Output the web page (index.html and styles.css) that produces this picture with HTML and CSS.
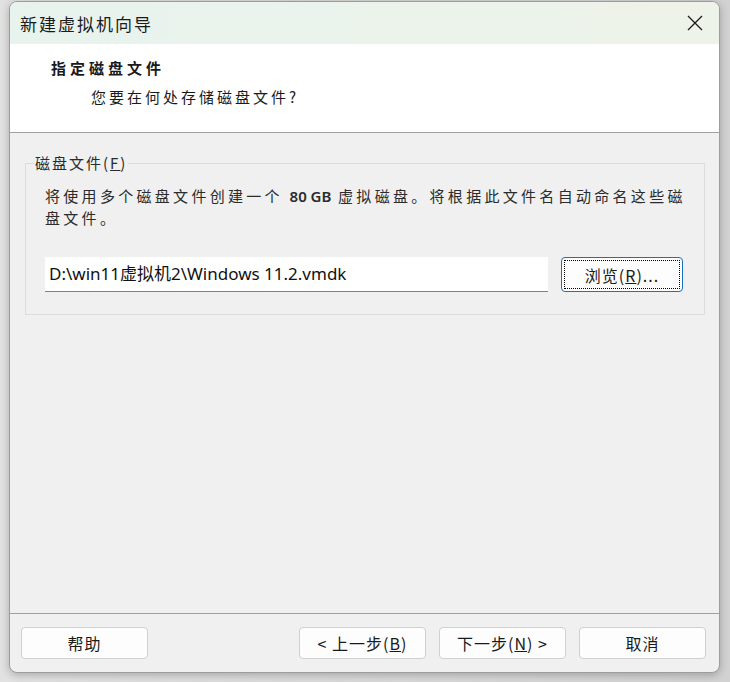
FILE: index.html
```html
<!DOCTYPE html>
<html lang="zh-CN">
<head>
    <meta charset="UTF-8">
    <meta name="viewport" content="width=device-width, initial-scale=1.0">
    <title>新建虚拟机向导</title>
    <link rel="stylesheet" href="styles.css">
</head>
<body>
    <div class="wizard">
        <div class="titlebar">
            <span class="titlebar-text">新建虚拟机向导</span>
            <svg class="close-icon" width="16" height="16" viewBox="0 0 16 16">
                <path d="M1 1 L15 15 M15 1 L1 15" stroke="#1a1a1a" stroke-width="1.3" fill="none"/>
            </svg>
        </div>
        <div class="header">
            <div class="header-title">指定磁盘文件</div>
            <div class="header-sub">您要在何处存储磁盘文件?</div>
        </div>
        <div class="content">
            <fieldset class="group">
                <legend>磁盘文件(<u>F</u>)</legend>
                <p class="desc">将使用多个磁盘文件创建一个 <b>80 GB</b> 虚拟磁盘。将根据此文件名自动命名这些磁<br>盘文件。</p>
                <div class="file-row">
                    <input class="file-input" type="text" value="D:\win11虚拟机2\Windows 11.2.vmdk">
                    <button class="btn btn-focus"><span class="focus-ring">浏览(<u>R</u>)...</span></button>
                </div>
            </fieldset>
        </div>
        <div class="footer">
            <button class="btn">帮助</button>
            <div class="footer-right">
                <button class="btn">&lt; 上一步(<u>B</u>)</button>
                <button class="btn">下一步(<u>N</u>) &gt;</button>
                <button class="btn">取消</button>
            </div>
        </div>
    </div>
</body>
</html>
```

FILE: styles.css
```css
html, body {
    margin: 0;
    padding: 0;
    height: 100%;
    overflow: hidden;
    background: linear-gradient(to right, #e2e2e2, #d2d2d2);
    font-family: "Noto Sans", "Noto Sans CJK SC", sans-serif;
    color: #1a1a1a;
}
.wizard {
    box-sizing: border-box;
    margin: 1px 0 0 9px;
    width: 711px;
    height: 672px;
    border: 1px solid #9d9d9d;
    border-radius: 8px;
    overflow: hidden;
    background: #f0f0f0;
    display: flex;
    flex-direction: column;
    box-shadow: 0 2px 8px rgba(0, 0, 0, 0.25);
}
.titlebar {
    height: 42px;
    flex: none;
    display: flex;
    align-items: center;
    justify-content: space-between;
    padding: 0 16px 0 10px;
    background: linear-gradient(to right, #e8f3ee, #eef3e9);
}
.titlebar-text {
    font-family: "Noto Sans CJK SC", sans-serif;
    font-size: 17px;
    letter-spacing: 2px;
}
.close-icon {
    display: block;
}
.header {
    height: 89px;
    flex: none;
    box-sizing: border-box;
    background: #fff;
    border-bottom: 1px solid #a0a0a0;
    padding: 14px 0 0 41px;
    font-family: "Noto Sans CJK SC", serif;
}
.header-title {
    font-size: 15px;
    font-weight: bold;
    line-height: 20px;
    letter-spacing: 4px;
}
.header-sub {
    font-size: 15px;
    line-height: 20px;
    margin: 9px 0 0 40px;
    letter-spacing: 3px;
}
.content {
    flex: 1;
    padding: 20px 14px 0 15px;
}
.group {
    margin: 0;
    min-width: 0;
    padding: 12px 20px 22px 19px;
    border: 1px solid #dcdcdc;
    font-family: "Noto Sans CJK SC", sans-serif;
}
.group legend {
    font-size: 15px;
    line-height: 20px;
    letter-spacing: 2px;
    padding: 0 1px;
    margin-left: -11px;
    color: #2b2b2b;
}
.desc {
    margin: 0;
    font-size: 15px;
    line-height: 22px;
    letter-spacing: 3.3px;
    white-space: nowrap;
    color: #2b2b2b;
}
.desc b {
    font-family: "Noto Sans", sans-serif;
    font-weight: 600;
    letter-spacing: 0;
}
.file-row {
    display: flex;
    gap: 13px;
    margin-top: 28px;
}
.file-input {
    width: 503px;
    height: 35px;
    box-sizing: border-box;
    border: none;
    border-bottom: 1px solid #808080;
    background: #fff;
    padding: 0 4px 3px;
    font-family: "Noto Sans", "Noto Sans CJK SC", sans-serif;
    font-size: 17px;
    color: #111;
}
.btn {
    width: 127px;
    height: 32px;
    box-sizing: border-box;
    border: 1px solid #d0d0d0;
    border-radius: 4px;
    background: #fdfdfd;
    font-family: "Noto Sans CJK SC", sans-serif;
    font-size: 16px;
    color: #1a1a1a;
    letter-spacing: 1px;
    padding: 0;
}
.btn-focus {
    width: 122px;
    height: 35px;
    border: 1px solid #1a6fc4;
    padding: 2px;
}
.focus-ring {
    display: flex;
    align-items: center;
    justify-content: center;
    height: 100%;
    border: 1px dotted #000;
    box-sizing: border-box;
}
.footer {
    height: 59px;
    flex: none;
    box-sizing: border-box;
    border-top: 1px solid #a0a0a0;
    padding: 13px 13px 0 11px;
    display: flex;
    justify-content: space-between;
    align-items: flex-start;
}
.footer-right {
    display: flex;
    gap: 13px;
}
```
